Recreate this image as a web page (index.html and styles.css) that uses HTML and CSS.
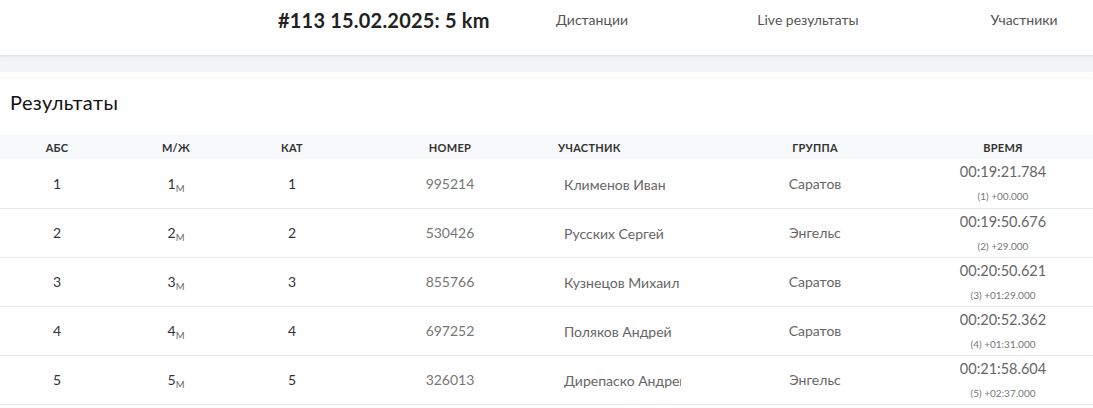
FILE: index.html
```html
<!DOCTYPE html>
<html lang="ru">
<head>
<meta charset="utf-8">
<title>Результаты</title>
<link rel="stylesheet" href="styles.css">
</head>
<body>
<header class="topbar">
  <div class="topbar-title">#113 15.02.2025: 5 km</div>
  <a class="nav-link">Дистанции</a>
  <a class="nav-link">Live результаты</a>
  <a class="nav-link">Участники</a>
</header>
<div class="band"></div>
<main class="card">
  <h2 class="card-title">Результаты</h2>
  <table class="results">
    <colgroup>
      <col class="c-abs"><col class="c-mf"><col class="c-cat"><col class="c-num"><col class="c-name"><col class="c-group"><col class="c-time">
    </colgroup>
    <thead>
      <tr>
        <th>АБС</th><th>М/Ж</th><th>КАТ</th><th>НОМЕР</th><th class="left">УЧАСТНИК</th><th>ГРУППА</th><th>ВРЕМЯ</th>
      </tr>
    </thead>
    <tbody>
      <tr>
        <td>1</td><td>1<sub>М</sub></td><td>1</td><td class="num">995214</td>
        <td class="name"><div class="name-box">Клименов Иван</div></td>
        <td class="group">Саратов</td>
        <td class="time"><div class="t-main">00:19:21.784</div><div class="t-sub">(1) +00.000</div></td>
      </tr>
      <tr>
        <td>2</td><td>2<sub>М</sub></td><td>2</td><td class="num">530426</td>
        <td class="name"><div class="name-box">Русских Сергей</div></td>
        <td class="group">Энгельс</td>
        <td class="time"><div class="t-main">00:19:50.676</div><div class="t-sub">(2) +29.000</div></td>
      </tr>
      <tr>
        <td>3</td><td>3<sub>М</sub></td><td>3</td><td class="num">855766</td>
        <td class="name"><div class="name-box">Кузнецов Михаил</div></td>
        <td class="group">Саратов</td>
        <td class="time"><div class="t-main">00:20:50.621</div><div class="t-sub">(3) +01:29.000</div></td>
      </tr>
      <tr>
        <td>4</td><td>4<sub>М</sub></td><td>4</td><td class="num">697252</td>
        <td class="name"><div class="name-box">Поляков Андрей</div></td>
        <td class="group">Саратов</td>
        <td class="time"><div class="t-main">00:20:52.362</div><div class="t-sub">(4) +01:31.000</div></td>
      </tr>
      <tr>
        <td>5</td><td>5<sub>М</sub></td><td>5</td><td class="num">326013</td>
        <td class="name"><div class="name-box">Дирепаско Андрей</div></td>
        <td class="group">Энгельс</td>
        <td class="time"><div class="t-main">00:21:58.604</div><div class="t-sub">(5) +02:37.000</div></td>
      </tr>
    </tbody>
  </table>
</main>
</body>
</html>
```
FILE: styles.css
```css
* { box-sizing: border-box; }
html, body {
  margin: 0;
  padding: 0;
  background: #ffffff;
  overflow: hidden;
}
body {
  font-family: Lato, "Open Sans", "Liberation Sans", sans-serif;
  color: #333;
  width: 1093px;
}
.topbar {
  height: 56px;
  display: grid;
  grid-template-columns: 278px 206px 216px 216px 216px;
  align-items: start;
  padding-top: 8px;
  border-bottom: 1px solid #e2e4e6;
  box-shadow: 0 1px 2px rgba(0,0,0,0.06);
  overflow: hidden;
  background: #fff;
  position: relative;
}
.topbar-title {
  grid-column: 2;
  white-space: nowrap;
  font-size: 20px;
  font-weight: 700;
  letter-spacing: 0.2px;
  color: #222;
  line-height: 24px;
}
.nav-link {
  text-align: center;
  white-space: nowrap;
  font-size: 14px;
  color: #555;
  line-height: 24px;
}
.band {
  height: 16px;
  background: #f2f4f5;
}
.card {
  background: #fff;
  border-top: 1px solid #fbfaf4;
  margin-top: 5px;
}
.card-title {
  margin: 0;
  padding: 13px 10px 0;
  height: 57px;
  font-size: 20px;
  font-weight: 400;
  letter-spacing: 0.4px;
  color: #111;
  line-height: 22px;
}
.results {
  border-collapse: collapse;
  table-layout: fixed;
  width: 1093px;
}
.c-abs { width: 114px; }
.c-mf { width: 124px; }
.c-cat { width: 108px; }
.c-num { width: 208px; }
.c-name { width: 163px; }
.c-group { width: 196px; }
.c-time { width: 180px; }
.results thead tr {
  background: #f7f9fa;
  height: 24px;
}
.results th {
  font-size: 11px;
  font-weight: 700;
  color: #333;
  text-align: center;
  padding: 0;
  letter-spacing: 0.3px;
}
.results th.left {
  text-align: left;
  padding-left: 4px;
}
.results tbody tr {
  height: 49px;
  border-bottom: 1px solid #e6e8ea;
}
.results td {
  text-align: center;
  font-size: 14px;
  color: #333;
  padding: 0;
  vertical-align: middle;
}
.results sub {
  font-size: 9.5px;
  color: #666;
  vertical-align: -3px;
  line-height: 0;
}
.results td.num { color: #777; }
.results td.name {
  text-align: left;
  color: #666;
  padding-left: 10px;
  padding-top: 2px;
}
.name-box {
  width: 117px;
  overflow: hidden;
  white-space: nowrap;
}
.results td.group {
  color: #666;
}
.results td.time {
  vertical-align: top;
  padding-top: 2px;
}
.t-main {
  font-size: 14.5px;
  color: #666;
  line-height: 22px;
}
.t-sub {
  font-size: 10px;
  color: #777;
  line-height: 20px;
  margin-top: 3px;
}
```
